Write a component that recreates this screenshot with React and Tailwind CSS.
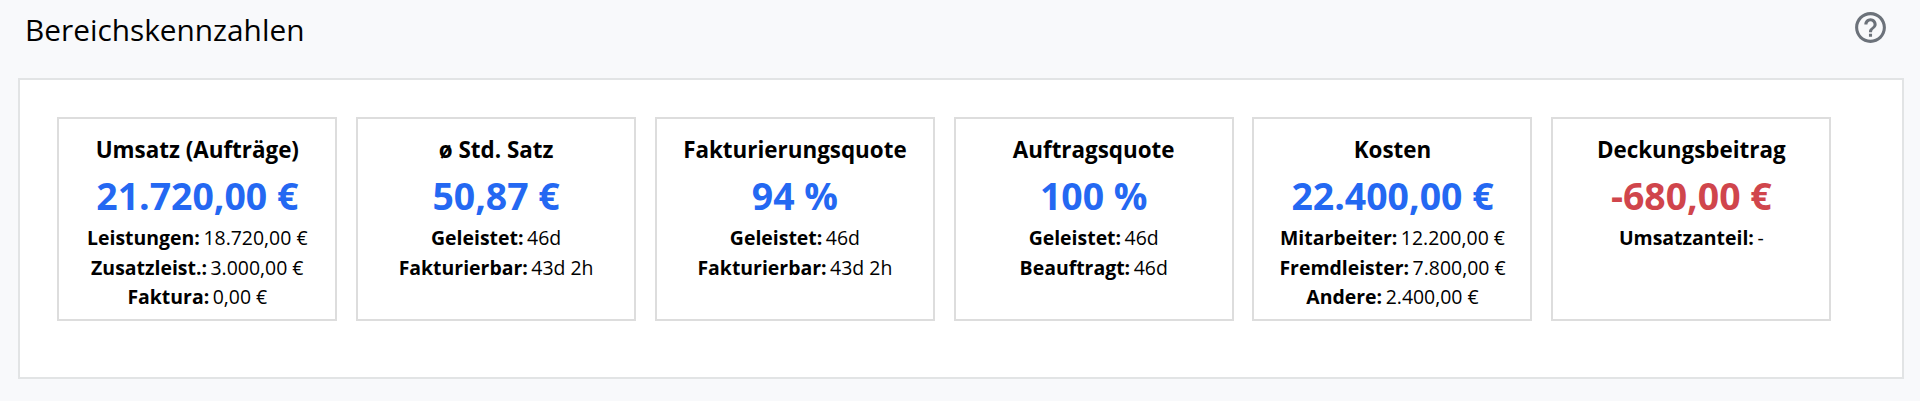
import { MdHelpOutline } from 'react-icons/md';

const cards = [
	{
		title: 'Umsatz (Aufträge)',
		value: '21.720,00 €',
		rows: [
			{ label: 'Leistungen', value: '18.720,00 €' },
			{ label: 'Zusatzleist.', value: '3.000,00 €' },
			{ label: 'Faktura', value: '0,00 €' },
		],
	},
	{
		title: 'ø Std. Satz',
		value: '50,87 €',
		rows: [
			{ label: 'Geleistet', value: '46d' },
			{ label: 'Fakturierbar', value: '43d 2h' },
		],
	},
	{
		title: 'Fakturierungsquote',
		value: '94 %',
		rows: [
			{ label: 'Geleistet', value: '46d' },
			{ label: 'Fakturierbar', value: '43d 2h' },
		],
	},
	{
		title: 'Auftragsquote',
		value: '100 %',
		rows: [
			{ label: 'Geleistet', value: '46d' },
			{ label: 'Beauftragt', value: '46d' },
		],
	},
	{
		title: 'Kosten',
		value: '22.400,00 €',
		rows: [
			{ label: 'Mitarbeiter', value: '12.200,00 €' },
			{ label: 'Fremdleister', value: '7.800,00 €' },
			{ label: 'Andere', value: '2.400,00 €' },
		],
	},
	{
		title: 'Deckungsbeitrag',
		value: '-680,00 €',
		negative: true,
		rows: [{ label: 'Umsatzanteil', value: '-' }],
	},
];

function KpiCard({ card }) {
	return (
		<div className="h-[204px] w-[280px] shrink-0 border-2 border-[#dddddd] pt-[14px] text-center">
			<h2 className="text-[22.4px] leading-[33px] font-bold">{card.title}</h2>
			<p className={`mt-[5px] text-[37.4px] leading-[50px] font-bold ${card.negative ? 'text-[#d0454c]' : 'text-[#2468f2]'}`}>
				{card.value}
			</p>
			<dl className="mt-[2.4px] text-[19.45px] leading-[29.3px]">
				{card.rows.map((row) => (
					<div key={row.label} className="flex justify-center gap-[3.5px]">
						<dt className="font-bold">{row.label}:</dt>
						<dd>{row.value}</dd>
					</div>
				))}
			</dl>
		</div>
	);
}

export default function App() {
	return (
		<main className="flex h-[401px] flex-col bg-[#f8f9fb] pr-[16px] pl-[18px] font-['Open_Sans',sans-serif] text-black">
			<header className="flex h-[78px] items-start justify-between pr-[15px] pl-[7px]">
				<h1 className="mt-[8px] text-[29.8px] leading-[44px]">Bereichskennzahlen</h1>
				<button type="button" aria-label="Hilfe" className="mt-[8.5px] text-[#6c727a]">
					<MdHelpOutline className="size-[37px]" />
				</button>
			</header>
			<section className="flex h-[301px] gap-[18.8px] border-2 border-[#e2e4e5] bg-white pt-[37px] pl-[37.3px]">
				{cards.map((card) => (
					<KpiCard key={card.title} card={card} />
				))}
			</section>
		</main>
	);
}
